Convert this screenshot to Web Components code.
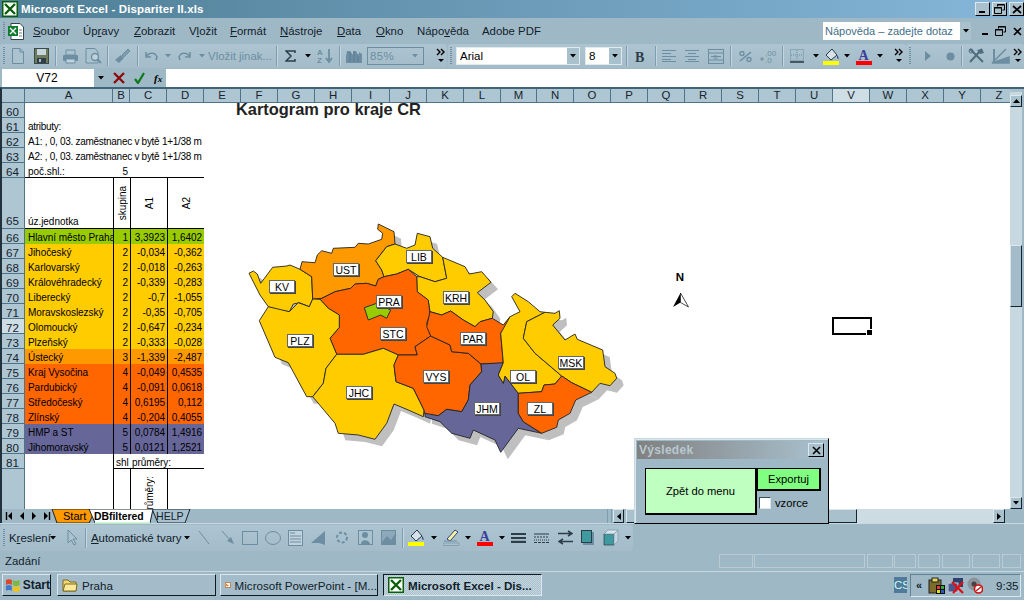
<!DOCTYPE html>
<html lang="cs"><head><meta charset="utf-8"><title>Excel</title>
<style>
html,body{margin:0;padding:0}
body{width:1024px;height:600px;overflow:hidden;position:relative;display:flex;flex-direction:column;background:#9fb8c6;font:11px "Liberation Sans",Arial,sans-serif;color:#000}
</style></head><body>
<x-titlebar></x-titlebar>
<x-menubar></x-menubar>
<x-toolbars></x-toolbars>
<x-formula></x-formula>
<x-sheet></x-sheet>
<x-tabstrip></x-tabstrip>
<x-drawbar></x-drawbar>
<x-statusbar></x-statusbar>
<x-taskbar></x-taskbar>
<x-dialog></x-dialog>
<script>
const D='#6d8ea2',K='#2c3e48',T='#4f6d7f';
const svg=(w,h,inner,extra='')=>`<svg width="${w}" height="${h}" viewBox="0 0 ${w} ${h}" ${extra} style="display:block">${inner}</svg>`;
const xlIcon=(s,bg='#0b5f0b')=>svg(s,s,`<rect x=".5" y=".5" width="${s-1}" height="${s-1}" fill="#fff" stroke="${bg}" stroke-width="2"/><path d="M3 3L${s-3} ${s-3}M${s-3} 3L3 ${s-3}" stroke="${bg}" stroke-width="2.4"/>`);
const IC={
 tri:svg(6,4,`<path d="M0 0H6L3 3.5Z" fill="#000"/>`),
 triD:svg(6,4,`<path d="M0 0H6L3 3.5Z" fill="${D}"/>`),
 more:svg(9,16,`<path d="M1 1L4 4L1 7M5 1L8 4L5 7" fill="none" stroke="#000" stroke-width="1.4"/><path d="M2 11H8L5 14Z" fill="#000"/>`),
 grip:svg(3,20,`<path d="M1 1V19" stroke="#6f8ea1" stroke-width="2" stroke-dasharray="1 1"/>`),
 new:svg(12,16,`<path d="M.5 .5H8L11.5 4V15.5H.5Z M8 .5V4H11.5" fill="#abc2cf" stroke="${D}"/>`),
 save:svg(15,16,`<rect x=".5" y=".5" width="14" height="15" fill="#6e7a5c" stroke="#3c4a48"/><rect x="3" y="1" width="9" height="6" fill="#c5d5dd"/><rect x="3" y="10" width="9" height="5" fill="#2e3f47"/><rect x="5" y="11" width="2" height="3" fill="#a9c0cd"/>`),
 print:svg(17,15,`<path d="M4 1H13V6H4Z" fill="#abc2cf" stroke="${D}"/><rect x="1" y="6" width="15" height="6" rx="1" fill="${D}"/><path d="M4 10H13V14H4Z" fill="#c0d2dc" stroke="${D}"/>`),
 preview:svg(17,16,`<path d="M1 .5H10L13 4V15H1Z" fill="#abc2cf" stroke="${D}"/><circle cx="10" cy="9" r="3.5" fill="#c0d2dc" stroke="${D}" stroke-width="1.4"/><path d="M12.5 11.5L16 15" stroke="${D}" stroke-width="2"/>`),
 brush:svg(17,16,`<path d="M1 12L7 7L10 10L5 15Z" fill="${D}"/><path d="M8 7L14 1L16 3L10 9Z" fill="#7f9db0" stroke="${D}"/>`),
 undo:svg(13,10,`<path d="M1 1V6H6M1 6C4 1 10 1 12 6L11 9" fill="none" stroke="${D}" stroke-width="1.6"/>`),
 redo:svg(13,10,`<path d="M12 1V6H7M12 6C9 1 3 1 1 6L2 9" fill="none" stroke="${D}" stroke-width="1.6"/>`),
 sigma:svg(11,12,`<path d="M10 3V1H1L6 6L1 11H10V9" fill="none" stroke="${K}" stroke-width="1.5"/>`),
 az:svg(16,16,`<text x="0" y="7" font-size="8" font-weight="700" fill="${D}" font-family="Liberation Sans">A</text><text x="0" y="15" font-size="8" font-weight="700" fill="${D}" font-family="Liberation Sans">Z</text><path d="M12 1V13M9 10L12 14L15 10" fill="none" stroke="${D}" stroke-width="1.8"/>`),
 chart:svg(16,16,`<path d="M0 15H16V6L13 4V9L10 3H7V7L4 3H1L0 8Z" fill="${D}"/><path d="M4 4V14M8 4V14M12 6V14" stroke="#5a7b8f"/>`),
 bold:svg(11,11,`<text x="0" y="10.5" font-size="14" font-weight="700" font-family="Liberation Serif" fill="${K}">B</text>`),
 al:svg(15,12,`<path d="M0 .5H14M0 3.5H9M0 6.5H14M0 9.5H9M0 11.5H14" stroke="${D}"/>`),
 ac:svg(15,12,`<path d="M0 .5H14M3 3.5H11M0 6.5H14M3 9.5H11M0 11.5H14" stroke="${D}"/>`),
 merge:svg(16,15,`<rect x=".5" y=".5" width="15" height="14" fill="none" stroke="${D}"/><path d="M0 4H16M0 11H16M3 7.5H13" stroke="${D}"/><text x="5.5" y="10" font-size="7" fill="${D}" font-family="Liberation Sans">a</text>`),
 pct:svg(13,11,`<path d="M1 10L12 1" stroke="${D}" stroke-width="1.6"/><circle cx="3" cy="2.5" r="2" fill="none" stroke="${D}" stroke-width="1.4"/><circle cx="10" cy="8.5" r="2" fill="none" stroke="${D}" stroke-width="1.4"/>`),
 dec:svg(17,14,`<text x="5" y="6.5" font-size="8" fill="${D}" font-family="Liberation Sans">,00</text><text x="5" y="14" font-size="8" fill="${D}" font-family="Liberation Sans">,0</text><path d="M0 10H4M2 8V12" stroke="${D}"/>`),
 border:svg(14,14,`<rect x=".5" y=".5" width="13" height="11" fill="none" stroke="${D}" stroke-dasharray="1 1"/><path d="M7 1V11M1 6H13" stroke="${D}" stroke-dasharray="1 1"/><path d="M0 13H14" stroke="${K}" stroke-width="1.6"/>`),
 fill:svg(17,17,`<path d="M3 7L9 1L14 7L8 12Z" fill="#d7e2e8" stroke="#263b4b"/><path d="M14 7C16 9 16 11 15 11C14 10 14 9 14 7Z" fill="#34407e"/><rect x="0" y="13" width="16" height="4" fill="#ffff00"/>`),
 fcol:svg(17,17,`<text x="2.5" y="11.5" font-size="14" font-weight="700" fill="#3a3f9a" font-family="Liberation Serif">A</text><rect x="0" y="13" width="16" height="4" fill="#ff0000"/>`),
 pen:svg(17,17,`<path d="M4 10L12 1L15 3L7 12Z" fill="#f1f1a0" stroke="#34407e"/><path d="M1 12H14" stroke="${D}"/><rect x="0" y="14" width="16" height="2.5" fill="#a9c0cd" stroke="${D}" stroke-width=".6"/>`),
 play:svg(6,10,`<path d="M0 0L6 5L0 10Z" fill="${D}"/>`),
 rec:svg(9,9,`<circle cx="4.5" cy="4.5" r="4" fill="${D}"/>`),
 tools:svg(17,16,`<path d="M2 1L15 14M14 1L2 14" stroke="${T}" stroke-width="2"/><path d="M9 2L14 1L16 5L12 6Z" fill="${T}"/><circle cx="3" cy="3" r="2" fill="none" stroke="${T}"/>`),
 draw:svg(19,16,`<path d="M1 15H18V9L1 15ZM1 15L15 1" fill="${D}" stroke="${D}" stroke-width="1.5"/><path d="M3 1V15" stroke="${D}" stroke-width="2"/>`),
 cursor:svg(10,17,`<path d="M1 1V14L4 11L7 16L9 15L6 10H10Z" fill="#abc2cf" stroke="${D}"/>`),
 line:svg(12,15,`<path d="M1 1L11 14" stroke="${D}"/>`),
 arrow:svg(13,15,`<path d="M1 1L9 10" stroke="${D}"/><path d="M6 11L10 7L13 14Z" fill="${D}"/>`),
 rect:svg(16,14,`<rect x=".5" y=".5" width="15" height="13" fill="none" stroke="${D}"/>`),
 ell:svg(16,14,`<ellipse cx="8" cy="7" rx="7.5" ry="6.5" fill="none" stroke="${D}"/>`),
 tbox:svg(15,16,`<rect x=".5" y=".5" width="14" height="15" fill="#c0d2dc" stroke="${D}"/><path d="M2 3H7M2 6H13M2 9H13M2 12H13" stroke="${D}"/>`),
 wart:svg(16,16,`<path d="M0 13L14 1V15L8 13Z" fill="${D}"/>`),
 diag:svg(14,15,`<circle cx="7" cy="7.5" r="5" fill="none" stroke="${D}" stroke-width="2" stroke-dasharray="3 2"/>`),
 clip:svg(15,15,`<rect x=".5" y=".5" width="14" height="14" fill="#abc2cf" stroke="${D}"/><circle cx="7" cy="5" r="3" fill="${D}"/><path d="M3 14C3 9 11 9 12 14Z" fill="${D}"/>`),
 pict:svg(15,15,`<rect x=".5" y=".5" width="14" height="14" fill="#8da9b9" stroke="${D}"/><path d="M1 12L6 6L10 10L14 4V14H1Z" fill="${D}"/>`),
 lstyle:svg(15,10,`<path d="M0 1H15M0 5H15" stroke="#2c3e48" stroke-width="2"/><path d="M0 9H15" stroke="#2c3e48" stroke-width="2.4"/>`),
 dash:svg(15,10,`<path d="M0 1H15" stroke="${K}"/><path d="M0 4H15" stroke="${K}" stroke-dasharray="2 1"/><path d="M0 7H15" stroke="${K}" stroke-dasharray="1 1"/><path d="M0 9.5H15" stroke="${K}" stroke-dasharray="3 1"/>`),
 arrs:svg(15,15,`<path d="M0 3.5H13M10 1L14 3.5L10 6" fill="none" stroke="${K}" stroke-width="1.5"/><path d="M15 11.5H2M5 9L1 11.5L5 14" fill="none" stroke="${K}" stroke-width="1.5"/>`),
 shad:svg(13,15,`<rect x="2" y="2" width="11" height="13" fill="#6d8ea2"/><rect x=".5" y=".5" width="10" height="12" fill="#3f9aa0" stroke="#2c3e48"/>`),
 d3:svg(16,17,`<path d="M1 5H11V16H1Z" fill="#3f9aa0" stroke="#2c3e48" stroke-width=".7"/><path d="M1 5L5 1H15L11 5Z" fill="#d8e4ea" stroke="#7a98a9" stroke-width=".7"/><path d="M11 5L15 1V12L11 16Z" fill="#c6d6df" stroke="#7a98a9" stroke-width=".7"/>`),
 folder:svg(16,14,`<path d="M1 2H6L8 4H14V13H1Z" fill="#f5d76e" stroke="#7d6a22"/><path d="M1 13L3 6H15L14 13Z" fill="#fbe99a" stroke="#7d6a22"/>`),
 ppt:svg(16,16,`<rect width="16" height="16" fill="#c8651b"/><rect x="2" y="2" width="12" height="12" fill="#fff"/><path d="M6 4A4 4 0 1 0 11 9L7 9Z" fill="#c8651b"/>`),
 win:svg(16,14,`<path d="M1 2Q4 0 7 2V7Q4 5 1 7Z" fill="#d9482b"/><path d="M8 2Q11 4 15 2V7Q11 9 8 7Z" fill="#7cb942"/><path d="M1 8Q4 6 7 8V13Q4 11 1 13Z" fill="#3f79c9"/><path d="M8 8Q11 10 15 8V13Q11 15 8 13Z" fill="#f1c40f"/>`),
};
const place=(items)=>{let e=0,o='';for(const [x,w,h,st,cls] of items){o+=`<span class="it ${cls||''}" style="margin-left:${x-e}px;width:${w}px;${st||''}">${h}</span>`;e=x+w}return o};
class Base extends HTMLElement{
 constructor(){super();this.attachShadow({mode:'open'}).innerHTML=`<style>:host{box-sizing:border-box}*{box-sizing:border-box}${this.css()}</style>${this.html()}`}
 css(){return''} html(){return''}
}
const itemCss=`.it{display:flex;align-items:center;justify-content:center;flex:none;white-space:nowrap}`;
const minI=svg(9,9,'<path d="M1 7H7" stroke="#000" stroke-width="2"/>');
const resI=svg(11,10,'<path d="M3.5 2.5V.5H10.5V6H8.5M.5 3.5H7.5V9.5H.5Z" fill="none" stroke="#000"/><path d="M3 1H10M0 4H8" stroke="#000"/>');
customElements.define('x-titlebar',class extends Base{
 css(){return`:host{display:flex;height:18px;flex:none;align-items:center;background:linear-gradient(90deg,#4f7f95,#86b6d9);color:#fff;font-weight:700;font-size:11.5px}
 .i{margin:0 3px 0 2px}.t{flex:1;letter-spacing:.14px}.b{width:15px;height:14px;background:#a9c0cd;border:1px solid;border-color:#dbe7ed #000 #000 #dbe7ed;margin-right:2px;display:flex;align-items:center;justify-content:center}`}
 html(){return`<span class="i">${xlIcon(16)}</span><span class="t">Microsoft Excel - Dispariter II.xls</span>
 <span class="b">${minI}</span><span class="b">${resI}</span>
 <span class="b" style="margin-right:0">${svg(10,9,'<path d="M1 1L9 8M9 1L1 8" stroke="#000" stroke-width="1.7"/>')}</span>`}
});
customElements.define('x-menubar',class extends Base{
 css(){return`${itemCss}:host{display:flex;height:26px;flex:none;align-items:center;background:#9fb8c6;color:#10212b;font-size:11.4px}u{text-underline-offset:1px}
 .help{color:#3f6f8a;background:#fff;height:18px;justify-content:space-between;padding-left:2px;font-size:11px}.help i{width:11px;height:18px;background:#a9c0cd;display:flex;align-items:center;justify-content:center}`}
 html(){const m=[[33,'<u>S</u>oubor',36],[83,'Úp<u>r</u>avy',36],[134,'<u>Z</u>obrazit',40],[189,'V<u>l</u>ožit',26],[230,'<u>F</u>ormát',35],[280,'<u>N</u>ástroje',41],[337,'<u>D</u>ata',24],[376,'<u>O</u>kno',25],[417,'Nápo<u>v</u>ěda',49],[482,'Adobe PDF',54]];
 return`<div style="display:flex;width:1024px;align-items:center">`+place([[3,3,IC.grip],[8,16,svg(16,17,'<path d="M3 .5H12L15.5 4V16.5H3Z" fill="#fff" stroke="#33424a"/><rect x="0" y="3" width="10" height="10" fill="#0f7b2d"/><path d="M2 5L8 11M8 5L2 11" stroke="#fff" stroke-width="1.4"/><path d="M11 7H14M11 10H14M11 13H14" stroke="#778"/>')],
 ...m.map(a=>[a[0],a[2],a[1],'justify-content:flex-start']),
 [823,148,`<span>Nápověda – zadejte dotaz</span><i>${IC.tri}</i>`,'','help'],
 [978,15,minI],[990,20,resI],[1010,14,svg(9,9,'<path d="M1 1L8 8M8 1L1 8" stroke="#000" stroke-width="1.7"/>')]])+`</div>`}
});
customElements.define('x-toolbars',class extends Base{
 css(){return`${itemCss}:host{display:flex;height:24px;flex:none;background:#9fb8c6}
 .bar{display:flex;align-items:center;background:linear-gradient(#adc4d1,#a4bcc9);border-radius:3px;height:24px;flex:none}
 .sep{width:1px;height:20px;background:#7f9db0;box-shadow:1px 0 #c5d6df}
 .cb{height:18px;background:#fff;display:flex;align-items:center;justify-content:space-between;padding-left:3px;font-size:11.5px;border:1px solid #dfe9ee}.cb i{width:12px;height:100%;background:#a9c0cd;display:flex;align-items:center;justify-content:center}
 .cd{height:18px;border:1px solid ${D};display:flex;align-items:center;justify-content:space-between;padding:0 5px 0 2px;color:${D};font-size:11.5px;width:100%;letter-spacing:.3px}`}
 html(){const sep='<div class="sep"></div>';
 return`<div class="bar" style="width:447px">`+place([[3,3,IC.grip],[12,12,IC.new],[34,15,IC.save],[55,1,sep],[62,17,IC.print],[85,17,IC.preview],[107,1,sep],[114,17,IC.brush],[137,1,sep],[145,13,IC.undo],[165,6,IC.triD],[178,13,IC.redo],[199,6,IC.triD],[210,60,`<span style="color:${D};font-size:11.4px"><span>Vložit jinak...</span></span>`],[276,1,sep],[285,11,IC.sigma],[305,6,IC.tri],[317,16,IC.az],[339,1,sep],[346,16,IC.chart],[367,57,`<div class="cd"><span>85%</span>${IC.triD}</div>`],[436,9,IC.more]])+`</div>
 <div class="bar" style="width:458px;margin-left:1px">`+place([[2,3,IC.grip],[8,124,`<div class="cb" style="width:100%"><span>Arial</span><i>${IC.tri}</i></div>`],[137,37,`<div class="cb" style="width:100%"><span>8</span><i>${IC.tri}</i></div>`],[178,1,sep],[187,11,IC.bold],[207,1,sep],[214,15,IC.al],[237,15,IC.ac],[260,16,IC.merge],[282,1,sep],[291,13,IC.pct],[312,17,IC.dec],[334,1,sep],[342,14,IC.border],[365,6,IC.tri],[375,17,IC.fill],[396,6,IC.tri],[408,17,IC.fcol],[429,6,IC.tri],[446,9,IC.more]])+`</div>
 <div class="bar" style="width:118px">`+place([[3,3,IC.grip],[19,6,IC.play],[40,9,IC.rec],[55,1,sep],[62,17,IC.tools],[85,19,IC.draw],[107,9,IC.more]])+`</div>`}
});
customElements.define('x-formula',class extends Base{
 css(){return`:host{display:flex;height:19px;flex:none;background:#9fb8c6;align-items:center}
 .n{width:92px;height:18px;margin-left:2px;background:#fff;text-align:center;font-size:12px;line-height:18px;padding-right:2px}
 .a{margin-left:4px;margin-right:9px}.f{flex:1;height:18px;background:#fff;margin-left:4px}.x{margin-left:9px}`}
 html(){return`<div class="n">V72</div><span class="a">${IC.tri}</span>
 ${svg(12,12,'<path d="M1 1L11 11M11 1L1 11" stroke="#8b0d0d" stroke-width="2.4"/>')}
 <span class="x">${svg(11,12,'<path d="M1 7L4 11L10 1" fill="none" stroke="#0c7a1c" stroke-width="2.2"/>')}</span>
 <span class="x" style="font:italic 700 11px 'Liberation Serif';white-space:nowrap">f<span style="font-size:9px">x</span></span><div class="f"></div>`}
});
customElements.define('x-cartogram',class extends Base{
 css(){return`:host{display:block;position:absolute;left:0;top:0;width:1008px;height:406px;pointer-events:none}
 svg{display:block} text{font-family:"Liberation Sans",Arial,sans-serif}`}
 html(){
 const a=p=>p.split(' ').map(s=>{const[x,y]=s.split(',').map(Number);return[240+x/3,220+y/3]});
 const b=p=>p.split(' ').map(s=>{const[x,y]=s.split(',').map(Number);return[420+x/3,250+y/3]});
 const R=[
 ['#ffcc00',a('27,160 40,153 52,162 62,190 98,142 140,138 150,135 180,148 215,170 218,237 208,260 178,248 160,252 148,275 115,270 85,260 60,225')],
 ['#ff9900',a('180,148 186,125 225,128 232,105 245,92 275,100 280,85 345,82 355,70 385,72 425,58 428,40 413,28 415,12 462,35 465,72 440,80 407,122 425,150 432,170 415,178 407,198 380,190 345,192 332,205 285,215 245,235 218,237 215,170')],
 ['#ffcc00',a('407,122 440,80 465,72 500,85 525,75 532,40 570,50 578,85 608,112 620,175 585,185 540,170 505,148 470,162 432,170 425,150')],
 ['#ffcc00',b('-10,80 0,80 45,95 80,85 68,22 135,50 148,72 185,65 213,97 172,128 195,150 220,185 217,205 180,215 165,230 130,210 92,183 65,195 30,185 24,150 -9,125')],
 ['#ff6600',a('240,238 285,215 332,205 345,192 380,190 407,198 415,178 432,170 470,162 505,148 530,170 532,215 565,240 570,282 560,310 572,348 525,380 532,405 475,405 430,385 370,403 290,403 270,355 298,322 298,285 265,265')],
 ['#99cc00',a('373,263 410,250 452,270 440,295 422,285 385,300')],
 ['#ffcc00',a('58,302 85,260 148,275 175,248 208,260 218,237 240,238 265,265 298,285 298,322 270,355 290,403 258,445 250,490 218,530 200,530 145,428 105,412')],
 ['#ffcc00',a('290,403 370,403 430,385 475,405 462,435 468,485 520,505 552,570 550,590 505,570 462,552 440,610 405,658 355,645 295,640 285,610 218,530 250,490 258,445')],
 ['#ff6600',b('32,258 -15,290 -8,315 -65,315 -78,345 -72,395 -20,415 12,480 15,493 55,497 80,478 125,485 145,450 150,405 185,365 183,342 145,310 95,305 90,285')],
 ['#ff6600',b('30,185 65,195 92,183 130,210 165,230 180,215 217,205 250,225 270,200 270,210 242,250 250,340 183,342 145,310 95,305 90,285 32,258 20,230')],
 ['#666699',b('183,342 250,338 235,375 250,400 255,378 295,430 295,490 310,515 365,550 295,535 242,607 225,570 160,540 150,565 95,550 60,515 15,500 15,490 55,497 80,478 125,485 145,450 150,405 185,365')],
 ['#ffcc00',b('275,140 285,130 325,155 360,185 375,187 320,215 310,265 345,310 425,378 405,402 372,405 365,425 295,430 255,378 250,400 235,375 250,338 242,250 270,200 300,185')],
 ['#ffcc00',b('375,187 405,190 418,182 420,205 398,225 435,270 465,252 472,268 548,300 555,350 585,370 590,385 570,407 540,400 515,427 455,398 425,378 345,310 310,265 320,215')],
 ['#ff6600',b('295,430 365,425 372,405 405,402 425,378 455,398 515,427 467,450 450,490 415,510 410,532 365,550 310,515 295,490')],
 ];
 const pts=r=>r.map(p=>p[0].toFixed(1)+','+p[1].toFixed(1)).join(' ');
 const L=[['KV',269,280],['UST',333,263],['LIB',406,250],['PRA',376,295],['STC',380,327],['PLZ',287,334],['JHC',346,386],['VYS',423,370],['KRH',443,291],['PAR',460,332],['OL',510,370],['JHM',474,402],['ZL',527,402],['MSK',558,356]];
 return `<svg width="1008" height="406" viewBox="2 103 1008 406">
 <g transform="translate(7,7)">${R.map(r=>`<polygon points="${pts(r[1])}" fill="#bfbfbf"/>`).join('')}</g>
 ${R.map(r=>`<polygon points="${pts(r[1])}" fill="${r[0]}" stroke="#222" stroke-width=".9" stroke-linejoin="round"/>`).join('')}
 ${L.map(([t,x,y])=>`<rect x="${x+1}" y="${y+1}" width="26" height="13" fill="#444"/><rect x="${x+.5}" y="${y+.5}" width="25" height="12" fill="#fff" stroke="#666"/><text x="${x+13}" y="${y+10.5}" font-size="10.5" text-anchor="middle">${t}</text>`).join('')}
 <text x="236" y="115" font-size="16.4" font-weight="700" fill="#222">Kartogram pro kraje CR</text>
 <text x="680" y="281" font-size="11.5" font-weight="700" text-anchor="middle">N</text>
 <path d="M680.5 293L673 307L680.5 302.5Z" fill="#000"/><path d="M680.5 293L688.5 307L680.5 302.5Z" fill="#fff" stroke="#000" stroke-width=".7"/>
 </svg>`}
});
customElements.define('x-sheet',class extends Base{
 css(){return`:host{display:flex;height:422px;flex:none;background:#fff;border-left:2px solid #22323c;border-top:2px solid #3f6379}
 .main{width:1008px;flex:none;display:flex;flex-direction:column;overflow:hidden}
 .hdr{display:flex;height:13px;flex:none;background:#aec5d2;overflow:hidden}
 .hdr span{flex:none;border-right:1px solid #4f7489;text-align:center;font-size:11.4px;line-height:13px;color:#14242e;height:13px}
 .hdr span.on{background:#cfdde5}
 .body{position:relative;flex:1;overflow:hidden;border-top:1px solid #4f7489}
 .g{display:grid;grid-template-columns:23px 88px 17px 37px 37px;grid-template-rows:15px repeat(4,15px) 51px repeat(15,15px) 15px 45px;width:202px}
 .c{overflow:hidden;white-space:nowrap;font-size:10px;line-height:15px;padding:1px 1px 0 3px;position:relative;letter-spacing:-.05px}
 .r{background:#aec5d2;border-right:1px solid #4f7489;border-bottom:1px solid #4f7489;text-align:center;font-size:11.6px;line-height:15px;color:#14242e;padding:1px 1px 0 0;overflow:hidden}
 .r.on{background:#cfdde5}
 .n{text-align:right;padding-right:2px;border-left:1px solid #000}
 .s{grid-column:2/6;letter-spacing:-.28px}
 .v{display:flex;justify-content:center;align-items:center;border-left:1px solid #000;padding:0;border-top:1px solid #000}
 .v b{font-weight:400;writing-mode:vertical-rl;transform:rotate(180deg)}
 .sel{position:absolute;left:830px;top:214px;width:40px;height:18px;border:2px solid #000}.sel::after{content:"";position:absolute;right:-3px;bottom:-3px;width:5px;height:5px;background:#000;border:1px solid #fff}
 .sb{flex:1;display:flex;flex-direction:column;background:#c8d8e0;border-right:2px solid #9fb8c6}
 .btn{height:12px;background:#a9c0cd;border:1px solid;border-color:#dbe7ed #14242e #14242e #dbe7ed;display:flex;align-items:center;justify-content:center;flex:none}
 .th{height:62px;background:#a4bcc9;border:1px solid;border-color:#dbe7ed #14242e #14242e #dbe7ed;margin-top:138px;flex:none}`}
 html(){
 const cols=[['A',88],['B',17],['C',37],['D',37],['E',37],['F',37],['G',37],['H',37],['I',38],['J',37],['K',37],['L',37],['M',36],['N',37],['O',37],['P',37],['Q',37],['R',37],['S',37],['T',37],['U',37],['V',37],['W',37],['X',37],['Y',37],['Z',37]];
 const data=[['Hlavní město Praha',1,'3,3923','1,6402','#99cc00'],['Jihočeský',2,'-0,034','-0,362','#ffcc00'],['Karlovarský',2,'-0,018','-0,263','#ffcc00'],['Královéhradecký',2,'-0,339','-0,283','#ffcc00'],['Liberecký',2,'-0,7','-1,055','#ffcc00'],['Moravskoslezský',2,'-0,35','-0,705','#ffcc00'],['Olomoucký',2,'-0,647','-0,234','#ffcc00'],['Plzeňský',2,'-0,333','-0,028','#ffcc00'],['Ústecký',3,'-1,339','-2,487','#ff9900'],['Kraj Vysočina',4,'-0,049','0,4535','#ff6600'],['Pardubický',4,'-0,091','0,0618','#ff6600'],['Středočeský',4,'0,6195','0,112','#ff6600'],['Zlínský',4,'-0,204','0,4055','#ff6600'],['HMP a ST',5,'0,0784','1,4916','#666699'],['Jihomoravský',5,'0,0121','1,2521','#666699']];
 let g='';const rh=(n,on)=>`<div class="r${on?' on':''}"${n==65?' style="display:flex;align-items:flex-end;justify-content:center"':''}>${n}</div>`;
 g+=rh(60)+`<div class="c s"></div>`;
 g+=rh(61)+`<div class="c s">atributy:</div>`;
 g+=rh(62)+`<div class="c s">A1: , 0, 03. zaměstnanec v bytě 1+1/38 m</div>`;
 g+=rh(63)+`<div class="c s">A2: , 0, 03. zaměstnanec v bytě 1+1/38 m</div>`;
 g+=rh(64)+`<div class="c" style="border-bottom:1px solid #000">poč.shl.:</div><div class="c n" style="border:0;border-bottom:1px solid #000">5</div><div class="c" style="border-bottom:1px solid #000;grid-column:span 2"></div>`;
 g+=rh(65)+`<div class="c" style="display:flex;align-items:flex-end;border-bottom:1px solid #000;line-height:13px">úz.jednotka</div>`+['skupina','A1','A2'].map((t,i)=>`<div class="c v" style="border-top:0;border-bottom:1px solid #000;"><b>${t}</b></div>`).join('');
 data.forEach((d,i)=>{const st=`background:${d[4]};`;g+=rh(66+i,i==6)+`<div class="c" style="${st}">${d[0]}</div><div class="c n" style="${st}">${d[1]}</div><div class="c n" style="${st}">${d[2]}</div><div class="c n" style="${st}">${d[3]}</div>`});
 g+=rh(81)+`<div class="c"></div><div class="c" style="border-left:1px solid #000;border-bottom:1px solid #000;padding-left:2px;padding-right:0;width:17px">shl</div><div class="c" style="border-bottom:1px solid #000;padding-left:2px;grid-column:span 2">průměry:</div>`;
 g+=rh('')+`<div class="c"></div><div class="c" style="border-left:1px solid #000"></div><div class="c v" style="border-top:0;align-items:flex-start;overflow:hidden;padding-top:7px"><b style="white-space:nowrap">průměry:</b></div><div class="c" style="border-left:1px solid #000"></div>`;
 return `<div class="main"><div class="hdr"><span style="width:23px"></span>${cols.map(c=>`<span style="width:${c[1]}px"${c[0]=='V'?' class="on"':''}>${c[0]}</span>`).join('')}</div>
 <div class="body"><div class="g">${g}</div><x-cartogram></x-cartogram><div class="sel"></div></div></div>
 <div class="sb"><div style="height:6px;flex:none;background:linear-gradient(#a9c0cd 3px,#c8d8e0 3px)"></div><div class="btn">${svg(7,4,'<path d="M0 4H7L3.5 0Z"/>')}</div><div class="th"></div><div style="flex:1"></div><div class="btn">${IC.tri}</div></div>`}
});
customElements.define('x-tabstrip',class extends Base{
 css(){return`${itemCss}:host{display:flex;height:14px;flex:none;background:#9fb8c6;border-left:2px solid #22323c;align-items:stretch;overflow:hidden}
 .sc{background:#cddbe3;flex:none;height:100%}.b{height:14px;background:#a9c0cd;border:1px solid;border-color:#dbe7ed #14242e #14242e #dbe7ed;display:flex;align-items:center;justify-content:center;flex:none}`}
 html(){const nav=(d,bar)=>svg(8,8,`<path d="${d}" fill="#000"/>${bar||''}`);
 return place([[1,12,nav('M7 0V8L3 4Z','<path d="M1.5 0V8" stroke="#000" stroke-width="1.4"/>')],[14,12,nav('M6 0V8L2 4Z')],[26,12,nav('M2 0V8L6 4Z')],[39,12,nav('M1 0V8L5 4Z','<path d="M6.5 0V8" stroke="#000" stroke-width="1.4"/>')]])
 +`<span style="margin-left:-3px;flex:none">${svg(143,14,`<polygon points="2,0 46,0 39,14 7,14" fill="#ff9900" stroke="#14242e"/><polygon points="102,0 140,0 135,14 108,14" fill="#a9c0cd" stroke="#14242e"/><polygon points="39,0 103,0 100,14 45,14" fill="#fff" stroke="#14242e"/><path d="M45 13.5H100" stroke="#c9ffc9" stroke-width="1.6"/>
 <text x="13" y="11" font-family="Liberation Sans" font-size="11">Start</text><text x="44" y="11" font-family="Liberation Sans" font-size="10.4" font-weight="700">DBfiltered</text><text x="106" y="11" font-family="Liberation Sans" font-size="10.6" fill="#14242e">HELP</text>`)}</span>
 <span style="flex:1"></span><span style="flex:none;width:5px;border-left:1px solid #7f9db0;border-right:1px solid #7f9db0"></span><span class="b" style="width:11px;margin-left:1px">${svg(4,7,'<path d="M4 0V7L0 3.5Z"/>')}</span><span style="flex:none;margin-left:2px;width:231px;background:#a9c0cd;border:1px solid;border-color:#dbe7ed #14242e #14242e #dbe7ed"></span><span class="sc" style="width:136px"></span><span class="b" style="width:12px">${svg(4,7,'<path d="M0 0V7L4 3.5Z"/>')}</span><span style="flex:none;width:19px"></span>`}
});
customElements.define('x-drawbar',class extends Base{
 css(){return`${itemCss}:host{display:flex;height:28px;flex:none;background:#9fb8c6;border-top:1px solid #c8d8e0;align-items:center}
 .bar{display:flex;align-items:center;height:26px;width:633px;background:linear-gradient(#adc4d1,#a4bcc9);border-radius:3px;font-size:11.4px;color:#10212b}
 .sep{width:1px;height:20px;background:#7f9db0;box-shadow:1px 0 #c5d6df}`}
 html(){return`<div class="bar">`+place([[3,3,IC.grip],[9,40,'<span>K<u>r</u>eslení</span>','justify-content:flex-start'],[50,6,IC.tri],[67,10,IC.cursor],[85,1,'<div class="sep"></div>'],[91,90,'<span><u>A</u>utomatické tvary</span>','justify-content:flex-start'],[184,6,IC.tri],[198,12,IC.line],[221,13,IC.arrow],[242,16,IC.rect],[265,16,IC.ell],[288,15,IC.tbox],[311,16,IC.wart],[335,14,IC.diag],[358,15,IC.clip],[381,15,IC.pict],[402,1,'<div class="sep"></div>'],[408,17,IC.fill],[431,6,IC.tri],[443,17,IC.pen],[465,6,IC.tri],[477,17,IC.fcol],[499,6,IC.tri],[511,15,IC.lstyle],[534,15,IC.dash],[558,15,IC.arrs],[581,13,IC.shad],[603,16,IC.d3],[625,6,IC.tri]])+`</div>`}
});
customElements.define('x-statusbar',class extends Base{
 css(){return`${itemCss}:host{display:flex;height:21px;flex:none;background:#9fb8c6;align-items:center;font-size:11.4px;color:#10212b;border-bottom:1px solid #c8d8e0}
 .f{height:14px;border:1px solid #b9ccd6;width:100%}`}
 html(){const f='<div class="f"></div>';return `<div style="display:flex;width:1024px;align-items:center">`+place([[5,36,'<span>Zadání</span>','justify-content:flex-start'],[719,34,f],[754,111,f],[867,26,f],[894,22,f],[918,22,f],[942,28,f],[972,28,f],[1002,19,f]])+`</div>`}
});
customElements.define('x-taskbar',class extends Base{
 css(){return`${itemCss}:host{display:flex;flex:1;background:#9fb8c6;align-items:center;font-size:11.6px;color:#10212b;padding-bottom:2px}
 .b{height:22px;width:100%;display:flex;align-items:center;gap:4px;padding-left:4px;background:#a4bcc9;border:1px solid;border-color:#dbe7ed #0d1a21 #0d1a21 #dbe7ed;justify-content:flex-start;overflow:hidden}
 .p{border-color:#0d1a21 #dbe7ed #dbe7ed #0d1a21;font-weight:700;background-image:conic-gradient(#c5d6df 25%,#a9c0cd 0 50%,#c5d6df 0 75%,#a9c0cd 0);background-size:2px 2px}
 .tray{height:23px;width:100%;border:1px solid;border-color:#5e8296 #dbe7ed #dbe7ed #5e8296;display:flex;align-items:center;padding-left:5px;gap:3px;justify-content:flex-start}`}
 html(){
 const clip=svg(17,17,'<rect x="1" y="3" width="12" height="13" fill="#7b6d2d" stroke="#222"/><rect x="4" y="1" width="6" height="4" fill="#e6d85c" stroke="#222"/><rect x="8" y="8" width="9" height="9" fill="#111"/><rect x="9" y="9" width="3" height="3" fill="#e33"/><rect x="13" y="9" width="3" height="3" fill="#3a3"/><rect x="9" y="13" width="3" height="3" fill="#dd2"/><rect x="13" y="13" width="3" height="3" fill="#35c"/>');
 const net=svg(16,17,'<rect x="5" y="1" width="10" height="9" fill="#2f3f6e"/><rect x="0" y="6" width="10" height="9" fill="#4a5a90" stroke="#ccd"/><path d="M4 5L15 16M15 5L5 16" stroke="#e01010" stroke-width="2.2"/>');
 const vol=svg(16,17,'<circle cx="7" cy="7" r="6.5" fill="#8a949a"/><circle cx="7" cy="7" r="2.5" fill="#444"/><circle cx="11.5" cy="12" r="4" fill="#fff" stroke="#d01010" stroke-width="1.6"/><path d="M9 14L14 10" stroke="#d01010" stroke-width="1.4"/>');
 return `<div style="display:flex;width:1024px;align-items:center">`+place([[2,49,`<div class="b" style="padding-left:2px;gap:2px;font-weight:700;font-size:12px">${IC.win}<span>Start</span></div>`],[57,159,`<div class="b">${IC.folder}<span>Praha</span></div>`],[220,158,`<div class="b">${IC.ppt}<span>Microsoft PowerPoint - [M...</span></div>`],[383,159,`<div class="b p">${xlIcon(16)}<span>Microsoft Excel - Dis...</span></div>`],
 [894,13,'<span style="display:block;width:13px;height:16px;background:#51799a;color:#cfe;overflow:hidden;line-height:16px;font-size:11.5px">CS</span>'],[910,111,`<div class="tray"><span style="font-weight:700;width:9px;font-size:11px">«</span>${clip}${net}${vol}<span style="margin-left:10px">9:35</span></div>`]])+`</div>`}
});
customElements.define('x-dialog',class extends Base{
 css(){return`:host{display:block;position:absolute;left:634px;top:438px;width:195px;height:86px;background:#9fb8c6;border:1px solid;border-color:#c8d8e0 #000 #000 #c8d8e0;box-shadow:inset 1px 1px #dbe7ed;padding:2px;font-size:11.2px}
 .t{height:18px;background:linear-gradient(90deg,#808080,#a9c2cf);color:#b9c8d0;font-weight:700;font-size:12px;display:flex;align-items:center;justify-content:space-between;padding:0 2px 0 2px;letter-spacing:.3px}
 .x{width:16px;height:14px;background:#a9c0cd;border:1px solid;border-color:#dbe7ed #000 #000 #dbe7ed;display:flex;align-items:center;justify-content:center}
 .c{display:flex;margin:9px 0 0 8px}
 .b{display:flex;align-items:center;justify-content:center;border:2px solid #000;border-top-width:1px;border-left-width:1px}
 .z{width:112px;height:47px;background:#bfffbf}.e{width:64px;height:23px;background:#80ff80}
 .chk{display:flex;align-items:center;gap:4px;margin:6px 0 0 2px}.chk i{width:12px;height:12px;background:#fff;border:1px solid;border-color:#39515f #dbe7ed #dbe7ed #39515f;display:block}`}
 html(){return`<div class="t"><span>Výsledek</span><span class="x">${svg(9,9,'<path d="M1 1L8 8M8 1L1 8" stroke="#000" stroke-width="1.6"/>')}</span></div>
 <div class="c"><div class="b z">Zpět do menu</div><div><div class="b e">Exportuj</div><div class="chk"><i></i><span>vzorce</span></div></div></div>`}
});
</script>
</body></html>
